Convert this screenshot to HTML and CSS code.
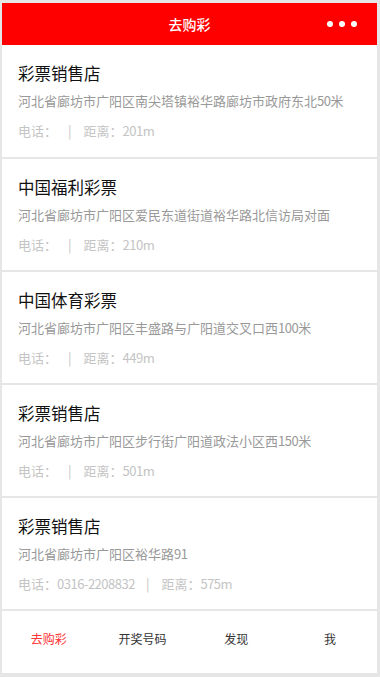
FILE: index.html
```html
<!DOCTYPE html>
<html lang="zh-CN">
<head>
<meta charset="utf-8">
<title>去购彩</title>
<link rel="stylesheet" href="styles.css">
</head>
<body>
<div class="app">
  <header class="topbar">
    <span class="topbar-side"></span>
    <h1 class="topbar-title">去购彩</h1>
    <span class="topbar-side topbar-more">
      <i class="dot"></i><i class="dot"></i><i class="dot"></i>
    </span>
  </header>
  <main class="list">
    <section class="shop">
      <h2 class="shop-name">彩票销售店</h2>
      <p class="shop-addr">河北省廊坊市广阳区南尖塔镇裕华路廊坊市政府东北<span class="num">50</span>米</p>
      <p class="shop-meta"><span>电话：</span><span class="sep">|</span><span>距离：<span class="num">201m</span></span></p>
    </section>
    <section class="shop">
      <h2 class="shop-name">中国福利彩票</h2>
      <p class="shop-addr">河北省廊坊市广阳区爱民东道街道裕华路北信访局对面</p>
      <p class="shop-meta"><span>电话：</span><span class="sep">|</span><span>距离：<span class="num">210m</span></span></p>
    </section>
    <section class="shop">
      <h2 class="shop-name">中国体育彩票</h2>
      <p class="shop-addr">河北省廊坊市广阳区丰盛路与广阳道交叉口西<span class="num">100</span>米</p>
      <p class="shop-meta"><span>电话：</span><span class="sep">|</span><span>距离：<span class="num">449m</span></span></p>
    </section>
    <section class="shop">
      <h2 class="shop-name">彩票销售店</h2>
      <p class="shop-addr">河北省廊坊市广阳区步行街广阳道政法小区西<span class="num">150</span>米</p>
      <p class="shop-meta"><span>电话：</span><span class="sep">|</span><span>距离：<span class="num">501m</span></span></p>
    </section>
    <section class="shop">
      <h2 class="shop-name">彩票销售店</h2>
      <p class="shop-addr">河北省廊坊市广阳区裕华路<span class="num">91</span></p>
      <p class="shop-meta"><span>电话：<span class="num">0316-2208832</span></span><span class="sep">|</span><span>距离：<span class="num">575m</span></span></p>
    </section>
  </main>
  <nav class="tabbar">
    <a class="tab tab-active">去购彩</a>
    <a class="tab">开奖号码</a>
    <a class="tab">发现</a>
    <a class="tab">我</a>
  </nav>
</div>
</body>
</html>
```
FILE: styles.css
```css
* { box-sizing: border-box; }
html, body { margin: 0; padding: 0; }
body {
  background: #e6e6e6;
  font-family: "Noto Sans CJK SC", "Noto Sans", sans-serif;
  width: 380px;
  height: 677px;
  overflow: hidden;
}
.app {
  width: 375px;
  margin: 3px 3px 0 2px;
}
.topbar {
  height: 42px;
  background: #ff0000;
  display: grid;
  grid-template-columns: 1fr auto 1fr;
  align-items: center;
}
.topbar-title {
  margin: 0;
  color: #fff;
  font-size: 14px;
  font-weight: 500;
  line-height: 20px;
}
.topbar-more {
  display: flex;
  justify-content: flex-end;
  gap: 6px;
  padding-right: 20px;
}
.dot {
  width: 6px;
  height: 6px;
  border-radius: 50%;
  background: #fff;
}
.list { display: flex; flex-direction: column; gap: 2px; }
.shop {
  background: #fff;
  height: 111px;
  padding: 17px 16px 0 16px;
}
.shop:first-child { height: 112px; }
.shop-name {
  margin: 0;
  font-size: 16.5px;
  font-weight: normal;
  line-height: 23px;
  color: #111;
}
.shop-addr {
  margin: 6px 0 0;
  font-size: 13px;
  line-height: 20px;
  color: #999;
  white-space: nowrap;
}
.shop-meta {
  margin: 10px 0 0;
  font-size: 13px;
  line-height: 20px;
  color: #c4c4c4;
  display: flex;
}
.num { letter-spacing: -0.5px; }
.sep { margin: 0 12px 0 11px; }
.tabbar {
  margin-top: 2px;
  height: 62px;
  background: #fff;
  display: grid;
  grid-template-columns: repeat(4, 1fr);
}
.tab {
  text-align: center;
  font-size: 12px;
  line-height: 16px;
  padding-top: 20px;
  color: #333;
}
.tab-active { color: #ff3333; }
```
